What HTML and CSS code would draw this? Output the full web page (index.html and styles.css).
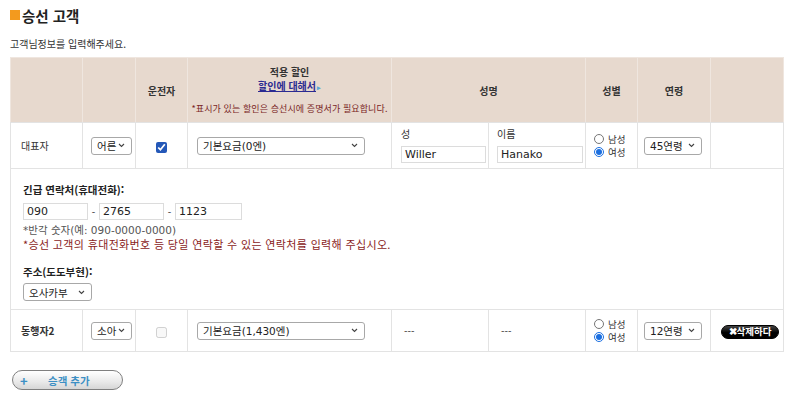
FILE: index.html
```html
<!DOCTYPE html>
<html lang="ko">
<head>
<meta charset="utf-8">
<title>승선 고객</title>
<link rel="stylesheet" href="styles.css">
</head>
<body>
<div class="page">
  <h2 class="title"><span class="title-mark"></span>승선 고객</h2>
  <p class="lead">고객님정보를 입력해주세요.</p>
  <table class="pax">
    <colgroup>
      <col class="c1"><col class="c2"><col class="c3"><col class="c4"><col class="c5"><col class="c6"><col class="c7"><col class="c8"><col class="c9">
    </colgroup>
    <thead>
      <tr class="head">
        <th></th>
        <th></th>
        <th>운전자</th>
        <th class="disc-head">
          <div class="disc-title">적용 할인</div>
          <div class="disc-link"><a href="#">할인에 대해서</a><span class="arrow">▸</span></div>
          <div class="disc-note">*표시가 있는 할인은 승선시에 증명서가 필요합니다.</div>
        </th>
        <th colspan="2">성명</th>
        <th>성별</th>
        <th>연령</th>
        <th></th>
      </tr>
    </thead>
    <tbody>
      <tr class="row1">
        <td class="who">대표자</td>
        <td class="p8"><span class="sel w41">어른</span></td>
        <td class="center"><input type="checkbox" class="chk" checked></td>
        <td class="p9"><span class="sel w168">기본요금(0엔)</span></td>
        <td class="p9 name">
          <div class="nlabel">성</div>
          <span class="inp w85">Willer</span>
        </td>
        <td class="p8 name">
          <div class="nlabel">이름</div>
          <span class="inp w86">Hanako</span>
        </td>
        <td class="p8">
          <label class="rad"><input type="radio" name="g1">남성</label>
          <label class="rad"><input type="radio" name="g1" checked>여성</label>
        </td>
        <td class="p6"><span class="sel w58">45연령</span></td>
        <td></td>
      </tr>
      <tr class="row2">
        <td colspan="9" class="detail">
          <div class="blabel">긴급 연락처(휴대전화):</div>
          <div class="tel">
            <span class="inp w65">090</span><span class="dash">-</span><span class="inp w65">2765</span><span class="dash">-</span><span class="inp w67">1123</span>
          </div>
          <div class="note-gray">*반각 숫자(예: 090-0000-0000)</div>
          <div class="note-red">*승선 고객의 휴대전화번호 등 당일 연락할 수 있는 연락처를 입력해 주십시오.</div>
          <div class="blabel addr">주소(도도부현):</div>
          <span class="sel w69">오사카부</span>
        </td>
      </tr>
      <tr class="row3">
        <td class="who b">동행자2</td>
        <td class="p8"><span class="sel w41">소아</span></td>
        <td class="center"><input type="checkbox" class="chk" disabled></td>
        <td class="p9"><span class="sel w168">기본요금(1,430엔)</span></td>
        <td class="p12 dashes">---</td>
        <td class="p12 dashes">---</td>
        <td class="p8">
          <label class="rad"><input type="radio" name="g2">남성</label>
          <label class="rad"><input type="radio" name="g2" checked>여성</label>
        </td>
        <td class="p6"><span class="sel w58">12연령</span></td>
        <td class="p10"><button class="del" type="button">✖삭제하다</button></td>
      </tr>
    </tbody>
  </table>
  <button class="add" type="button"><span class="plus">+</span><span class="add-text">승객 추가</span></button>
</div>
</body>
</html>
```

FILE: styles.css
```css
* { box-sizing: border-box; }
html, body { margin: 0; padding: 0; background: #fff; }
body {
  font-family: "DejaVu Sans", "Noto Sans CJK KR", sans-serif;
  color: #333;
  font-size: 10px;
}
.page { padding: 5px 10px 0 10px; }

.title {
  margin: 0;
  display: flex;
  align-items: center;
  height: 20px;
  font-family: "Noto Sans CJK KR", sans-serif;
  font-size: 14.5px;
  font-weight: 700;
  color: #222;
}
.title-mark {
  width: 10px; height: 10px;
  background: #f39a1e;
  margin-right: 2px;
}
.lead {
  margin: 11px 0 5px 0;
  font-family: "Noto Sans CJK KR", sans-serif;
  font-size: 10px;
  line-height: 16px;
  color: #333;
}

.pax {
  width: 773px;
  border-collapse: collapse;
  table-layout: fixed;
}
.c1 { width: 72px; } .c2 { width: 53px; } .c3 { width: 52px; }
.c4 { width: 204px; } .c5 { width: 97px; } .c6 { width: 97px; }
.c7 { width: 52px; } .c8 { width: 73px; } .c9 { width: 73px; }

.pax th {
  background: #e7d9ce;
  border: 1px solid #efe6df;
  border-bottom-color: #e3e3e3;
  height: 65px;
  padding: 0;
  font-family: "Noto Sans CJK KR", sans-serif;
  font-size: 10px;
  font-weight: 700;
  color: #333;
  vertical-align: middle;
  text-align: center;
}
.pax td {
  border: 1px solid #e3e3e3;
  padding: 0;
  vertical-align: middle;
  font-family: "Noto Sans CJK KR", sans-serif;
}
.disc-title { line-height: 14px; }
.disc-link { line-height: 14px; }
.disc-link a { color: #2b2a91; text-decoration: underline; }
.arrow { color: #58a7d6; font-size: 7px; margin-left: 1px; }
.disc-note {
  margin-top: 8px;
  line-height: 14px;
  font-size: 9px;
  font-weight: 400;
  color: #7a2525;
  letter-spacing: 0.1px;
}

.row1 td { height: 46px; }
.row3 td { height: 42px; }
.who { padding-left: 10px !important; font-size: 10px; color: #333; }
.who.b { font-weight: 700; }
.center { text-align: center; }
.p6 { padding-left: 6px !important; }
.p8 { padding-left: 8px !important; }
.p9 { padding-left: 9px !important; }
.p10 { padding-left: 10px !important; }
.p12 { padding-left: 12px !important; }

.sel {
  display: inline-flex;
  align-items: center;
  height: 18px;
  padding-left: 5px;
  border: 1px solid #a8a8a8;
  border-radius: 3px;
  background: #fff url("data:image/svg+xml;utf8,<svg xmlns='http://www.w3.org/2000/svg' width='7' height='5'><path d='M1 1l2.5 2.5 2.5-2.5' fill='none' stroke='%23444' stroke-width='1.1'/></svg>") no-repeat right 6px center;
  font-family: "DejaVu Sans", "Noto Sans CJK KR", sans-serif;
  font-size: 10.5px;
  color: #222;
  vertical-align: middle;
}
.w41 { width: 41px; } .w58 { width: 58px; } .w69 { width: 69px; } .w168 { width: 168px; }

.chk {
  width: 11px; height: 11px; margin: 0;
  accent-color: #2458b8;
  vertical-align: middle;
}

.name { vertical-align: middle; }
.nlabel { font-size: 10px; line-height: 12px; color: #333; margin-bottom: 5px; }
.inp {
  display: inline-flex;
  align-items: center;
  height: 17px;
  padding-left: 3px;
  border: 1px solid #dcdcdc;
  background: #fff;
  font-family: "DejaVu Sans", "Noto Sans CJK KR", sans-serif;
  font-size: 11px;
  color: #222;
  vertical-align: middle;
}
.w65 { width: 65px; } .w67 { width: 67px; } .w85 { width: 85px; } .w86 { width: 86px; }

.rad {
  display: flex;
  align-items: center;
  height: 13px;
  font-size: 9.5px;
  line-height: 13px;
  color: #333;
}
.rad input {
  width: 10px; height: 10px;
  margin: 0 4px 0 0;
  accent-color: #1b6fe0;
}

.detail { padding: 13px 12px 8px 12px !important; }
.blabel {
  font-size: 10.5px;
  font-weight: 700;
  line-height: 16px;
  color: #222;
}
.tel { display: flex; align-items: center; margin-top: 5px; }
.dash { width: 11px; text-align: center; font-size: 10px; }
.note-gray {
  margin-top: 3px;
  font-family: "DejaVu Sans", "Noto Sans CJK KR", sans-serif;
  font-size: 10.5px;
  line-height: 14px;
  color: #555;
}
.note-red {
  font-size: 11px;
  line-height: 14px;
  color: #8a1c1c;
  letter-spacing: 0.35px;
}
.addr { margin-top: 13px; margin-bottom: 3px; }

.dashes { font-size: 10px; color: #333; }

.del {
  display: inline-flex;
  align-items: center;
  justify-content: center;
  width: 58px;
  height: 14px;
  padding: 0;
  border: 1px solid #000;
  border-radius: 7px;
  background: linear-gradient(#444, #000 55%);
  color: #fff;
  font-family: "Noto Sans CJK KR", sans-serif;
  font-size: 9.5px;
  font-weight: 700;
  line-height: 1;
}

.add {
  display: flex;
  align-items: center;
  margin: 18px 0 0 2px;
  width: 111px;
  height: 20px;
  padding: 0 0 0 7px;
  border: 1px solid #7f7f7f;
  border-radius: 10px;
  background: linear-gradient(#ffffff, #e9e9e9 60%, #d6d6d6);
  font-family: "Noto Sans CJK KR", sans-serif;
  font-weight: 700;
  color: #3c8fc4;
}
.plus { font-size: 13px; line-height: 1; width: 28px; text-align: left; }
.add-text { font-size: 10.5px; }
```
